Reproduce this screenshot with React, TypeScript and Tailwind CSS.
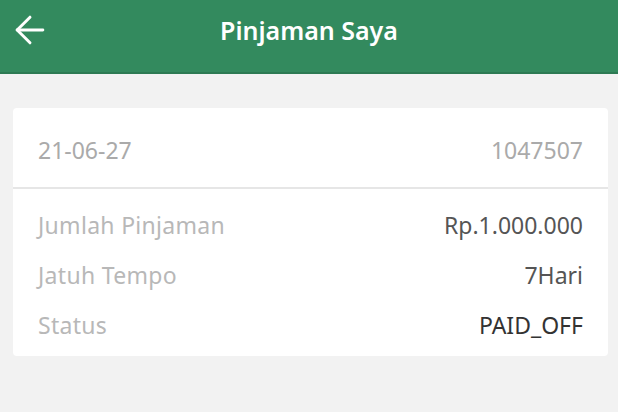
import { ArrowLeft } from 'lucide-react';

const rows = [
  { label: 'Jumlah Pinjaman', value: 'Rp.1.000.000', tone: 'text-[#555555]' },
  { label: 'Jatuh Tempo', value: '7Hari', tone: 'text-[#555555]' },
  { label: 'Status', value: 'PAID_OFF', tone: 'text-[#333333]' },
];

export default function App() {
  return (
    <div className="min-h-[412px] bg-[#f2f2f2] font-['Noto_Sans',sans-serif]">
      {/* Header */}
      <header className="relative flex h-[74px] items-center justify-center bg-[#338a5e] border-b-2 border-[#2d7a53]">
        <button className="absolute left-[8px] top-[8px] text-white">
          <ArrowLeft className="h-[44px] w-[44px]" strokeWidth={1.6} />
        </button>
        <h1 className="-mt-[10px] text-[25px] font-semibold text-white">Pinjaman Saya</h1>
      </header>

      {/* Loan card */}
      <div className="pl-[13px] pr-[10px] pt-[34px]">
        <div className="rounded-[4px] bg-white">
          <div className="flex h-[81px] items-center justify-between border-b-2 border-[#e6e6e6] px-[25px] pt-[6px] text-[23px] text-[#aaaaaa]">
            <span>21-06-27</span>
            <span>1047507</span>
          </div>
          <div className="px-[25px] pb-[6px] pt-[11px]">
            {rows.map((r) => (
              <div key={r.label} className="flex h-[50px] items-center justify-between text-[23px]">
                <span className="tracking-[0.3px] text-[#b8b8b8]">{r.label}</span>
                <span className={r.tone}>{r.value}</span>
              </div>
            ))}
          </div>
        </div>
      </div>
    </div>
  );
}
